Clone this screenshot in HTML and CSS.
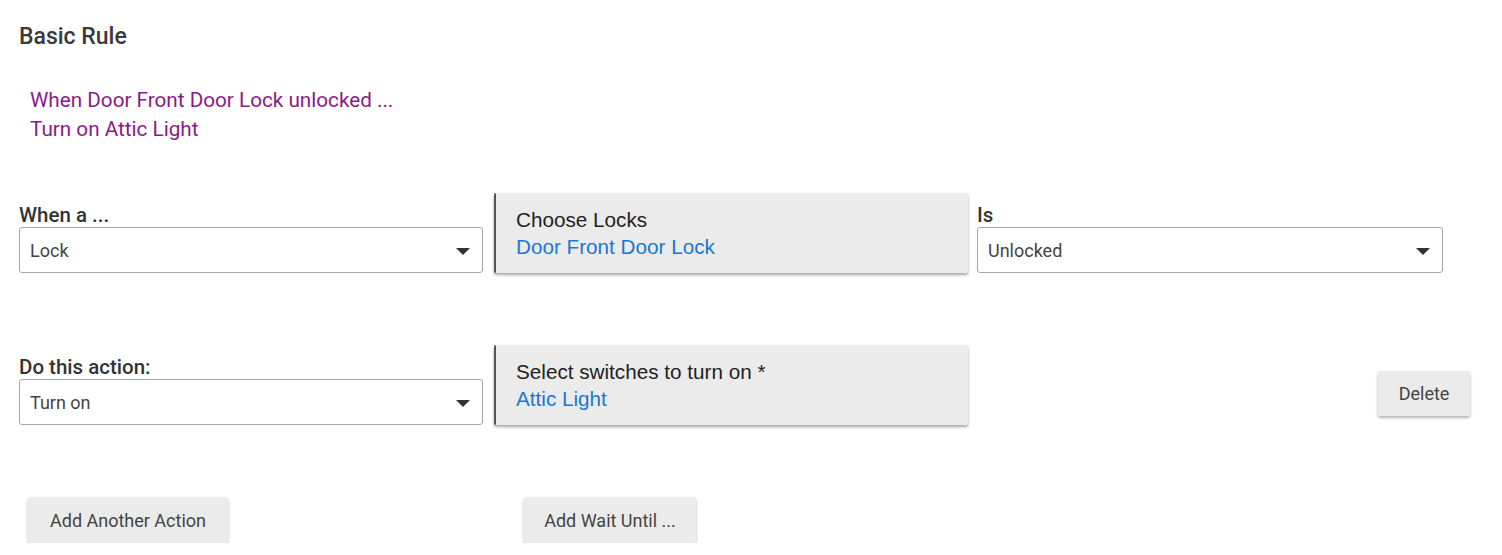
FILE: index.html
```html
<!DOCTYPE html>
<html>
<head>
<meta charset="utf-8">
<link rel="stylesheet" href="styles.css">
</head>
<body>
<div class="page">
  <h1 class="title">Basic Rule</h1>
  <div class="summary">
    <div>When Door Front Door Lock unlocked ...</div>
    <div>Turn on Attic Light</div>
  </div>

  <div class="row row-trigger">
    <div class="field">
      <div class="label">When a ...</div>
      <div class="select"><span>Lock</span><span class="caret"></span></div>
    </div>
    <div class="card">
      <div class="card-title">Choose Locks</div>
      <div class="card-value">Door Front Door Lock</div>
    </div>
    <div class="field field-is">
      <div class="label">Is</div>
      <div class="select"><span>Unlocked</span><span class="caret"></span></div>
    </div>
  </div>

  <div class="row row-action">
    <div class="field">
      <div class="label">Do this action:</div>
      <div class="select"><span>Turn on</span><span class="caret"></span></div>
    </div>
    <div class="card">
      <div class="card-title">Select switches to turn on *</div>
      <div class="card-value">Attic Light</div>
    </div>
    <div class="delete-cell">
      <button class="btn btn-delete">Delete</button>
    </div>
  </div>

  <div class="row row-buttons">
    <div><button class="btn btn-add">Add Another Action</button></div>
    <div><button class="btn btn-wait">Add Wait Until ...</button></div>
  </div>
</div>
</body>
</html>
```

FILE: styles.css
```css
html, body {
  margin: 0;
  padding: 0;
  background: #ffffff;
}
body {
  font-family: Roboto, "Liberation Sans", sans-serif;
  color: #333333;
}
.page {
  padding: 23px 0 0 19px;
}
.title {
  margin: 0;
  font-size: 23px;
  line-height: 27px;
  font-weight: 500;
  color: #3a3a3a;
}
.summary {
  margin-top: 36px;
  padding-left: 11px;
  font-size: 20.7px;
  line-height: 29px;
  color: #8a1a88;
}
.row {
  display: grid;
  grid-template-columns: 464px 474px 464px;
  column-gap: 11px;
  align-items: end;
}
.row-trigger {
  margin-top: 49px;
}
.field-is {
  margin-left: -2px;
}
.row-action {
  margin-top: 72px;
  grid-template-columns: 464px 474px 502px;
}
.row-buttons {
  margin-top: 72px;
  align-items: start;
}
.field {
  display: flex;
  flex-direction: column;
}
.label {
  font-size: 20.5px;
  line-height: 24px;
  font-weight: 500;
  color: #333333;
}
.select {
  box-sizing: border-box;
  height: 46px;
  border: 1px solid #a8a8a8;
  border-radius: 3px;
  padding: 0 12px 0 10px;
  display: flex;
  align-items: center;
  justify-content: space-between;
  font-size: 18px;
  color: #444444;
}
.caret {
  width: 0;
  height: 0;
  border-left: 7px solid transparent;
  border-right: 7px solid transparent;
  border-top: 7px solid #333333;
  margin-top: 2px;
}
.card {
  box-sizing: border-box;
  height: 80px;
  background: #ebebeb;
  border-left: 2px solid #555555;
  border-radius: 2px;
  box-shadow: 0 2px 3px rgba(0, 0, 0, 0.35);
  padding: 13px 20px 0 20px;
  font-family: "Liberation Sans", Arial, sans-serif;
  font-size: 20.7px;
  line-height: 27px;
}
.card-title {
  color: #1f1f1f;
}
.card-value {
  color: #1b76d3;
}
.delete-cell {
  display: flex;
  justify-content: flex-end;
  padding-right: 11px;
  margin-bottom: 9px;
}
.btn {
  box-sizing: border-box;
  height: 46px;
  border: none;
  border-radius: 2px;
  background: #ebebeb;
  box-shadow: 0 2px 3px rgba(0, 0, 0, 0.3);
  font-family: Roboto, "Liberation Sans", sans-serif;
  font-size: 18px;
  color: #444444;
  padding: 0;
  cursor: pointer;
}
.btn-delete {
  width: 92px;
  height: 45px;
}
.btn-add {
  margin-left: 9px;
  width: 200px;
}
.btn-wait {
  margin-left: 30px;
  width: 172px;
}
```
